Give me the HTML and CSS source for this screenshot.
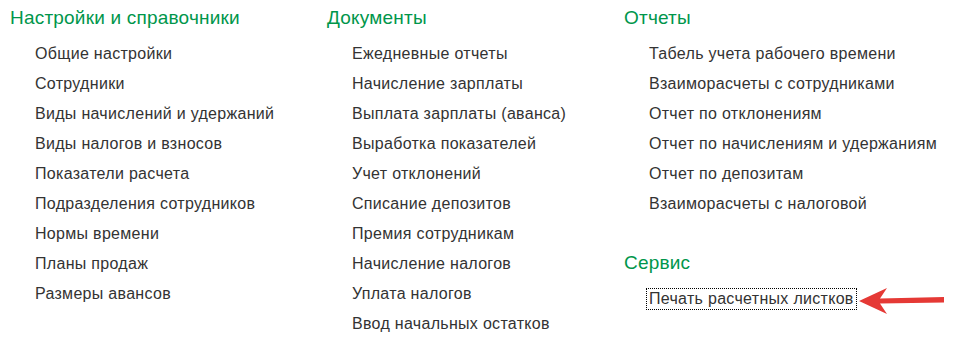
FILE: index.html
```html
<!DOCTYPE html>
<html lang="ru">
<head>
    <meta charset="UTF-8">
    <meta name="viewport" content="width=device-width, initial-scale=1.0">
    <title>Зарплата</title>
    <link rel="stylesheet" href="styles.css">
</head>
<body>
    <div class="panel">
        <div class="column col-settings">
            <div class="section">
                <h3>Настройки и справочники</h3>
                <ul class="links">
                    <li><a href="#">Общие настройки</a></li>
                    <li><a href="#">Сотрудники</a></li>
                    <li><a href="#">Виды начислений и удержаний</a></li>
                    <li><a href="#">Виды налогов и взносов</a></li>
                    <li><a href="#">Показатели расчета</a></li>
                    <li><a href="#">Подразделения сотрудников</a></li>
                    <li><a href="#">Нормы времени</a></li>
                    <li><a href="#">Планы продаж</a></li>
                    <li><a href="#">Размеры авансов</a></li>
                </ul>
            </div>
        </div>
        <div class="column col-docs">
            <div class="section">
                <h3>Документы</h3>
                <ul class="links">
                    <li><a href="#">Ежедневные отчеты</a></li>
                    <li><a href="#">Начисление зарплаты</a></li>
                    <li><a href="#">Выплата зарплаты (аванса)</a></li>
                    <li><a href="#">Выработка показателей</a></li>
                    <li><a href="#">Учет отклонений</a></li>
                    <li><a href="#">Списание депозитов</a></li>
                    <li><a href="#">Премия сотрудникам</a></li>
                    <li><a href="#">Начисление налогов</a></li>
                    <li><a href="#">Уплата налогов</a></li>
                    <li><a href="#">Ввод начальных остатков</a></li>
                </ul>
            </div>
        </div>
        <div class="column col-reports">
            <div class="section">
                <h3>Отчеты</h3>
                <ul class="links">
                    <li><a href="#">Табель учета рабочего времени</a></li>
                    <li><a href="#">Взаиморасчеты с сотрудниками</a></li>
                    <li><a href="#">Отчет по отклонениям</a></li>
                    <li><a href="#">Отчет по начислениям и удержаниям</a></li>
                    <li><a href="#">Отчет по депозитам</a></li>
                    <li><a href="#">Взаиморасчеты с налоговой</a></li>
                </ul>
            </div>
            <div class="section">
                <h3>Сервис</h3>
                <ul class="links">
                    <li>
                        <a href="#" class="current">Печать расчетных листков
                            <svg class="pointer" width="86" height="28" viewBox="0 0 86 28">
                                <polygon points="0,14 28,1 21,11.5 85,10 85,15.5 21,16.5 28,27" fill="#e53935"/>
                            </svg>
                        </a>
                    </li>
                </ul>
            </div>
        </div>
    </div>
</body>
</html>
```

FILE: styles.css
```css
body {
    font-family: "Liberation Sans", Arial, sans-serif;
    background-color: #fff;
    margin: 0;
    padding: 0;
}
.panel {
    display: flex;
    padding: 6px 0 0 10px;
}
.col-settings {
    width: 317px;
}
.col-docs {
    width: 297px;
}
.col-reports {
    flex: 1;
}
.section + .section {
    margin-top: 32px;
}
h3 {
    margin: 0 0 9px 0;
    font-size: 19px;
    font-weight: normal;
    letter-spacing: 0.2px;
    line-height: 24px;
    color: #00964b;
}
.links {
    list-style: none;
    margin: 0;
    padding: 0 0 0 25px;
}
.links li {
    height: 30px;
    line-height: 30px;
}
.links a {
    font-size: 16px;
    letter-spacing: 0.3px;
    color: #333;
    text-decoration: none;
}
.links a.current {
    position: relative;
    display: inline-block;
    line-height: 20px;
    padding: 0 2px;
    margin-left: -3px;
    border: 1px dotted #000;
}
.pointer {
    position: absolute;
    left: 100%;
    top: -2px;
    margin-left: 3px;
}
```
